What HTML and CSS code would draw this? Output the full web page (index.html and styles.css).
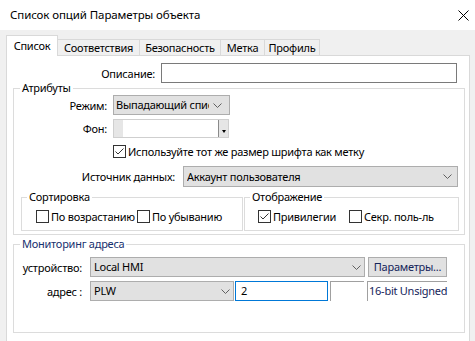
FILE: index.html
```html
<!DOCTYPE html>
<html lang="ru">
<head>
<meta charset="utf-8">
<title>Список опций Параметры объекта</title>
<link rel="stylesheet" href="styles.css">
</head>
<body>
<div class="window">
  <div class="titlebar">
    <span class="title">Список опций Параметры объекта</span>
    <svg class="close" width="11" height="11" viewBox="0 0 11 11"><path d="M0.5 0.5L10.5 10.5M10.5 0.5L0.5 10.5" stroke="#000" stroke-width="1" fill="none"/></svg>
  </div>
  <div class="tabs">
    <div class="tab active w-list">Список</div>
    <div class="tab w-match">Соответствия</div>
    <div class="tab w-sec">Безопасность</div>
    <div class="tab w-label">Метка</div>
    <div class="tab w-prof">Профиль</div>
  </div>
  <div class="panel">
    <div class="row desc-row">
      <span class="lbl lbl-desc">Описание:</span>
      <div class="edit desc-edit"></div>
    </div>

    <fieldset class="group attrs">
      <legend>Атрибуты</legend>
      <div class="row row-mode">
        <span class="lbl lbl-attr">Режим:</span>
        <div class="select sel-mode"><span class="sel-text">Выпадающий список</span><svg class="chev" width="9" height="5" viewBox="0 0 9 5"><path d="M0.5 0.5L4.5 4.5L8.5 0.5" stroke="#606060" fill="none"/></svg></div>
      </div>
      <div class="row row-bg">
        <span class="lbl lbl-attr">Фон:</span>
        <div class="colorpick"><div class="swatch"></div><div class="cp-btn"><span class="cp-tri"></span></div></div>
      </div>
      <div class="row row-check">
        <span class="check"><span class="box"><svg width="11" height="11" viewBox="0 0 11 11"><path d="M1.5 5.5L4 8L9.5 2.5" stroke="#333" stroke-width="1" fill="none"/></svg></span><span class="ctext">Используйте тот же размер шрифта как метку</span></span>
      </div>
      <div class="row row-src">
        <span class="lbl lbl-src">Источник данных:</span>
        <div class="select sel-src"><span class="sel-text">Аккаунт пользователя</span><svg class="chev" width="9" height="5" viewBox="0 0 9 5"><path d="M0.5 0.5L4.5 4.5L8.5 0.5" stroke="#606060" fill="none"/></svg></div>
      </div>
      <div class="subgroups">
        <fieldset class="group sub sort">
          <legend>Сортировка</legend>
          <div class="checks">
            <span class="check c-asc"><span class="box"></span><span class="ctext">По возрастанию</span></span>
            <span class="check c-desc"><span class="box"></span><span class="ctext">По убыванию</span></span>
          </div>
        </fieldset>
        <fieldset class="group sub disp">
          <legend>Отображение</legend>
          <div class="checks">
            <span class="check c-priv"><span class="box"><svg width="11" height="11" viewBox="0 0 11 11"><path d="M1.5 5.5L4 8L9.5 2.5" stroke="#333" stroke-width="1" fill="none"/></svg></span><span class="ctext">Привилегии</span></span>
            <span class="check"><span class="box"></span><span class="ctext">Секр. поль-ль</span></span>
          </div>
        </fieldset>
      </div>
    </fieldset>

    <fieldset class="group monitor">
      <legend class="blue">Мониторинг адреса</legend>
      <div class="row row-dev">
        <span class="lbl lbl-mon">устройство:</span>
        <div class="select sel-dev"><span class="sel-text">Local HMI</span><svg class="chev" width="9" height="5" viewBox="0 0 9 5"><path d="M0.5 0.5L4.5 4.5L8.5 0.5" stroke="#606060" fill="none"/></svg></div>
        <div class="button">Параметры...</div>
      </div>
      <div class="row row-addr">
        <span class="lbl lbl-mon">адрес :</span>
        <div class="select sel-plw"><span class="sel-text">PLW</span><svg class="chev" width="9" height="5" viewBox="0 0 9 5"><path d="M0.5 0.5L4.5 4.5L8.5 0.5" stroke="#606060" fill="none"/></svg></div>
        <div class="edit addr-edit">2</div>
        <div class="sunken blank"></div>
        <div class="sunken type">16-bit Unsigned</div>
      </div>
    </fieldset>
  </div>
</div>
</body>
</html>
```

FILE: styles.css
```css
* { box-sizing: border-box; }
html, body { margin: 0; padding: 0; }
body {
  width: 475px;
  height: 341px;
  overflow: hidden;
  background: #f0f0f0;
  font-family: "Noto Sans", "Liberation Sans", sans-serif;
  font-size: 11px;
  letter-spacing: -0.25px;
  color: #000;
}
.window {
  width: 475px;
  height: 341px;
  overflow: hidden;
  background: #f0f0f0;
}
.titlebar {
  height: 30px;
  background: #fff;
  display: flex;
  align-items: center;
  justify-content: space-between;
  padding: 0 6px 0 10px;
}
.title { font-size: 11.5px; line-height: 16px; letter-spacing: -0.1px; }
.close { display: block; }

/* tabs */
.tabs {
  height: 25px;
  display: flex;
  align-items: flex-end;
  padding-left: 6px;
}
.tab {
  height: 16px;
  line-height: 16px;
  border: 1px solid #d9d9d9;
  border-bottom: none;
  background: #f0f0f0;
  text-align: center;
  margin-left: -1px;
  white-space: nowrap;
}
.tab.active {
  margin-left: 0;
  height: 21px;
  line-height: 19px;
  background: #fff;
  margin-bottom: -1px;
  position: relative;
  z-index: 1;
}
.w-list { width: 52px; }
.w-match { width: 83px; }
.w-sec { width: 82px; }
.w-label { width: 45px; }
.w-prof { width: 56px; }

/* panel */
.panel {
  margin: 0 5px 0 6px;
  height: 300px;
  background: #fff;
  border: 1px solid #d9d9d9;
}
.row {
  display: flex;
  align-items: center;
}
.lbl { white-space: nowrap; text-align: right; flex: none; }
.desc-row { margin-top: 7px; }
.lbl-desc { width: 148px; margin-right: 6px; }
.edit {
  height: 20px;
  border: 1px solid #7a7a7a;
  background: #fff;
  line-height: 18px;
  padding-left: 5px;
}
.desc-edit { width: 296px; }

/* groups */
.group {
  border: 1px solid #dcdcdc;
  padding: 0;
  min-width: 0;
  margin: 0;
}
.group legend {
  height: 10px;
  line-height: 10px;
  padding: 0 2px;
  margin-left: 6px;
  white-space: nowrap;
}
.attrs { margin: 0 4px 0 6px; padding-bottom: 3px; }
.lbl-attr { width: 93px; margin-right: 6px; }
.row-mode { margin-top: 2px; }
.row-bg { margin-top: 4px; }
.row-check { margin-top: 7px; padding-left: 99px; height: 13px; }
.row-src { margin-top: 8px; }
.lbl-src { width: 161px; margin-right: 8px; }

.select {
  height: 20px;
  display: flex;
  align-items: center;
  background: #e1e1e1;
  border: 1px solid #adadad;
  padding: 0 7px 0 2px;
  flex: none;
}
.sel-text {
  flex: 1;
  overflow: hidden;
  white-space: nowrap;
  line-height: 18px;
}
.chev { display: block; flex: none; margin-left: 4px; }
.sel-mode { width: 117px; }
.sel-src { width: 275px; height: 21px; padding-left: 3px; padding-right: 5px; }

.colorpick {
  width: 116px;
  height: 19px;
  display: flex;
  border: 1px solid #cfcfcf;
  background: #e6e6e6;
  padding-left: 9px;
}
.swatch {
  flex: 1;
  background: #fff;
  border-right: 1px solid #8a8a8a;
}
.cp-btn {
  width: 9px;
  display: flex;
  align-items: flex-end;
  justify-content: center;
  padding-bottom: 4px;
}
.cp-tri {
  width: 0;
  height: 0;
  border-left: 2.5px solid transparent;
  border-right: 2.5px solid transparent;
  border-top: 3px solid #000;
}

.check {
  display: flex;
  align-items: center;
  white-space: nowrap;
  height: 13px;
}
.box {
  width: 13px;
  height: 13px;
  border: 1px solid #333;
  background: #fff;
  flex: none;
  margin-right: 2px;
}
.box svg { display: block; }
.ctext { line-height: 13px; }

.subgroups {
  display: flex;
  gap: 1px;
  margin: 5px 5px 0 7px;
}
.sub legend { margin-left: 5px; }
.sort { width: 222px; }
.disp { width: 215px; }
.checks {
  display: flex;
  margin-top: 8px;
  margin-bottom: 7px;
}
.sort .checks { padding-left: 14px; }
.disp .checks { padding-left: 13px; }
.c-asc { width: 100px; overflow: hidden; margin-right: 1px; }
.c-priv { width: 91px; }

.monitor { margin: 4px 4px 0 6px; padding-bottom: 31px; }
.blue { color: #16306e; }
.row-dev { margin-top: 8px; }
.row-addr { margin-top: 4px; }
.lbl-mon { width: 68px; margin-right: 8px; }
.sel-dev { width: 275px; padding-left: 3px; padding-right: 3px; }
.button {
  margin-left: 3px;
  width: 79px;
  height: 20px;
  background: #e1e1e1;
  border: 1px solid #adadad;
  text-align: center;
  line-height: 18px;
  color: #14245a;
  white-space: nowrap;
}
.sel-plw { width: 144px; padding-left: 3px; padding-right: 3px; }
.addr-edit { width: 93px; margin-left: 1px; border-color: #0078d7; }
.sunken {
  height: 20px;
  border-left: 1px solid #a0a0a0;
  border-top: 1px solid #a0a0a0;
  line-height: 18px;
  white-space: nowrap;
}
.blank { width: 34px; margin-left: 2px; }
.type { width: 80px; margin-left: 3px; padding-left: 1px; color: #14245a; }
```
